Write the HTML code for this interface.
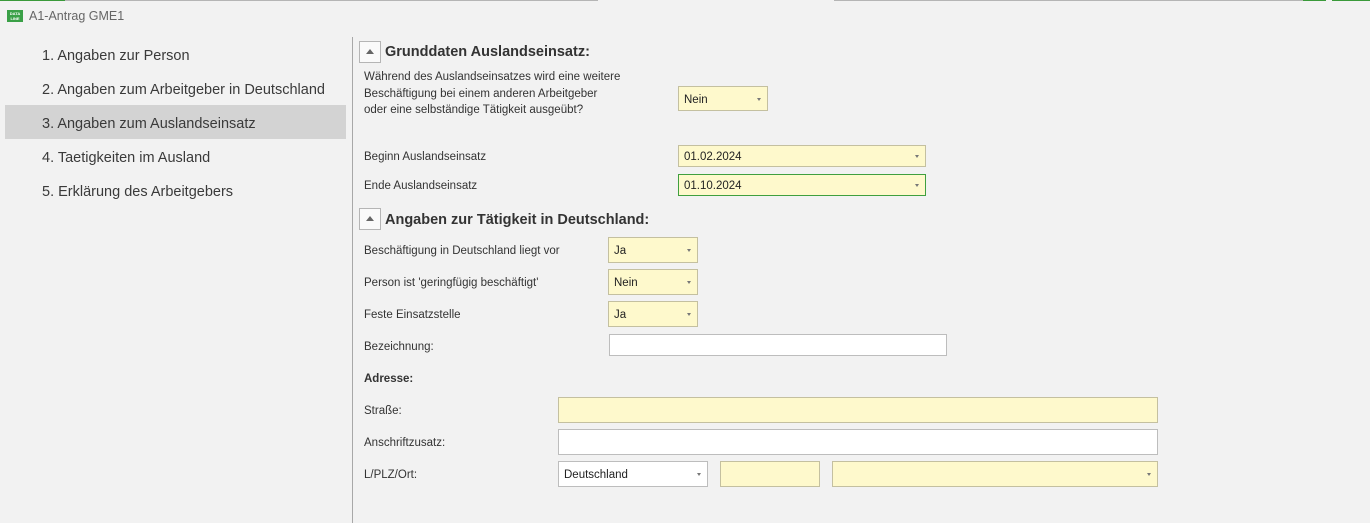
<!DOCTYPE html>
<html><head><meta charset="utf-8"><style>
*{margin:0;padding:0;box-sizing:border-box}
body{width:1370px;height:523px;background:#f2f2f2;font-family:"Liberation Sans",sans-serif;color:#333;position:relative;overflow:hidden}
.a{position:absolute;white-space:nowrap}
.nav{font-size:14.5px;color:#3a3a3a;left:42px}
.lbl{font-size:11.5px;color:#333;left:364px}
.f{position:absolute;border:1px solid #bdbdbd;background:#fff;font-size:11.5px;color:#222;padding-left:5px;padding-top:2px;display:flex;align-items:center}
.y{background:#fef9cc;border-color:#c4c0a0}
.dd::after{content:"";position:absolute;right:6px;top:50%;margin-top:-1px;border-left:2.5px solid transparent;border-right:2.5px solid transparent;border-top:3px solid #777}
.h{font-size:14.5px;font-weight:bold;color:#333;left:385px}
.tg{position:absolute;left:359px;width:22px;height:22px;border:1px solid #b5b5b5;background:#fafafa}
.tg::after{content:"";position:absolute;left:6px;top:7px;border-left:4.5px solid transparent;border-right:4.5px solid transparent;border-bottom:5px solid #666}
</style></head><body>
<div class="a" style="left:0;top:0;width:65px;height:1px;background:#3a9a3a"></div>
<div class="a" style="left:65px;top:0;width:533px;height:1px;background:#b5b5b5"></div>
<div class="a" style="left:834px;top:0;width:470px;height:1px;background:#b5b5b5"></div>
<div class="a" style="left:1303px;top:0;width:23px;height:1px;background:#3a9a3a"></div>
<div class="a" style="left:1332px;top:0;width:38px;height:1px;background:#3a9a3a"></div>
<div class="a" style="left:7px;top:10px;width:16px;height:12px;background:#3aa047;color:#fff;font-size:4px;font-weight:bold;line-height:5px;text-align:center;padding-top:1px">DATA<br>LINE</div>
<div class="a" style="left:29px;top:9px;font-size:12.5px;color:#666">A1-Antrag GME1</div>

<div class="a" style="left:5px;top:105px;width:341px;height:34px;background:#d3d3d3"></div>
<div class="a nav" style="top:48px">1. Angaben zur Person</div>
<div class="a nav" style="top:82px">2. Angaben zum Arbeitgeber in Deutschland</div>
<div class="a nav" style="top:116px">3. Angaben zum Auslandseinsatz</div>
<div class="a nav" style="top:150px">4. Taetigkeiten im Ausland</div>
<div class="a nav" style="top:184px">5. Erklärung des Arbeitgebers</div>
<div class="a" style="left:352px;top:37px;width:1px;height:486px;background:#a8a8a8"></div>

<div class="tg" style="top:41px"></div>
<div class="a h" style="top:44px">Grunddaten Auslandseinsatz:</div>
<div class="a lbl" style="top:69px;line-height:16.5px">Während des Auslandseinsatzes wird eine weitere<br>Beschäftigung bei einem anderen Arbeitgeber<br>oder eine selbständige Tätigkeit ausgeübt?</div>
<div class="f y dd" style="left:678px;top:86px;width:90px;height:25px">Nein</div>
<div class="a lbl" style="top:151px">Beginn Auslandseinsatz</div>
<div class="f y dd" style="left:678px;top:145px;width:248px;height:22px">01.02.2024</div>
<div class="a lbl" style="top:180px">Ende Auslandseinsatz</div>
<div class="f y dd" style="left:678px;top:174px;width:248px;height:22px;border-color:#3f9f3f">01.10.2024</div>

<div class="tg" style="top:208px"></div>
<div class="a h" style="top:212px">Angaben zur Tätigkeit in Deutschland:</div>
<div class="a lbl" style="top:245px">Beschäftigung in Deutschland liegt vor</div>
<div class="f y dd" style="left:608px;top:237px;width:90px;height:26px">Ja</div>
<div class="a lbl" style="top:277px">Person ist 'geringfügig beschäftigt'</div>
<div class="f y dd" style="left:608px;top:269px;width:90px;height:26px">Nein</div>
<div class="a lbl" style="top:309px">Feste Einsatzstelle</div>
<div class="f y dd" style="left:608px;top:301px;width:90px;height:26px">Ja</div>
<div class="a lbl" style="top:341px">Bezeichnung:</div>
<div class="f" style="left:609px;top:334px;width:338px;height:22px"></div>
<div class="a lbl" style="top:373px;font-weight:bold">Adresse:</div>
<div class="a lbl" style="top:405px">Straße:</div>
<div class="f y" style="left:558px;top:397px;width:600px;height:26px"></div>
<div class="a lbl" style="top:437px">Anschriftzusatz:</div>
<div class="f" style="left:558px;top:429px;width:600px;height:26px"></div>
<div class="a lbl" style="top:469px">L/PLZ/Ort:</div>
<div class="f dd" style="left:558px;top:461px;width:150px;height:26px">Deutschland</div>
<div class="f y" style="left:720px;top:461px;width:100px;height:26px"></div>
<div class="f y dd" style="left:832px;top:461px;width:326px;height:26px"></div>
</body></html>
